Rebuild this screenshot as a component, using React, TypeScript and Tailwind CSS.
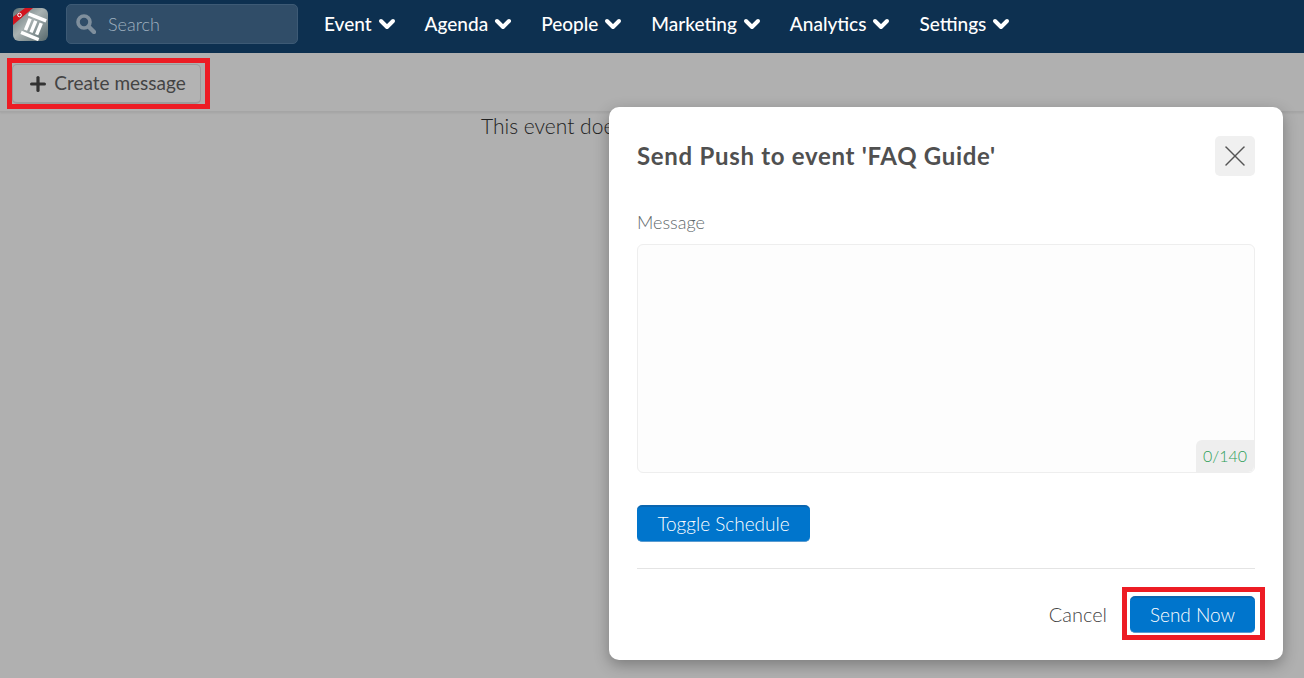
import React from 'react';
import { ChevronDown, Plus, X } from 'lucide-react';

const NAV_ITEMS = ['Event', 'Agenda', 'People', 'Marketing', 'Analytics', 'Settings'];

const Logo = () => (
  <svg width="35" height="33" viewBox="0 0 35 33" className="shrink-0">
    <defs>
      <linearGradient id="logo-bg" x1="0" y1="0" x2="1" y2="1">
        <stop offset="0" stopColor="#5f6f72" />
        <stop offset="0.45" stopColor="#a9b2b2" />
        <stop offset="1" stopColor="#56686c" />
      </linearGradient>
      <clipPath id="logo-clip">
        <rect x="0" y="0" width="35" height="33" rx="6" />
      </clipPath>
    </defs>
    <g clipPath="url(#logo-clip)">
      <rect width="35" height="33" fill="url(#logo-bg)" />
      <polygon points="0,17 0,9 12,0 20,0" fill="#d2141e" />
      <circle cx="6.5" cy="7" r="1.8" fill="none" stroke="#fff" strokeWidth="1" />
      <g transform="rotate(22 20.7 19)" fill="#fff">
        <rect x="11" y="7" width="19" height="3.5" />
        <rect x="11" y="27" width="19" height="3.5" />
        <rect x="12.5" y="12.5" width="3.5" height="12.5" />
        <rect x="18.5" y="12.5" width="3.5" height="12.5" />
        <rect x="24.5" y="12.5" width="3.5" height="12.5" />
      </g>
    </g>
  </svg>
);

const SearchIcon = () => (
  <svg width="20" height="20" viewBox="0 0 20 20" fill="none" stroke="#7f8f9d" className="shrink-0">
    <circle cx="8" cy="8" r="6" strokeWidth="3.6" />
    <line x1="13" y1="13" x2="18" y2="18" strokeWidth="4.4" strokeLinecap="round" />
  </svg>
);

export default function App() {
  return (
    <div className="relative h-[678px] overflow-hidden bg-[#b0b0b0] font-['Lato','Open_Sans',sans-serif]">
      {/* top nav */}
      <nav className="flex h-[53px] items-center bg-[#0d3050] pb-[5px] pl-[13px]">
        <Logo />
        <div className="ml-[18px] flex h-10 w-[232px] items-center rounded-[5px] border border-[#3d5a75] bg-[#304d68] pl-[9px]">
          <SearchIcon />
          <span className="ml-[12px] text-[18px] font-light text-[#9fb0bf]">Search</span>
        </div>
        <div className="ml-[26px] flex gap-[26px]">
          {NAV_ITEMS.map((item) => (
            <div key={item} className="flex items-center gap-[3px] text-[19px] font-medium text-white">
              {item}
              <ChevronDown size={24} strokeWidth={4} />
            </div>
          ))}
        </div>
      </nav>

      {/* toolbar */}
      <div className="h-[59px] border-b border-[#a5a5a5] pl-[7px] pt-[5px] shadow-[0_1px_2px_rgba(0,0,0,0.08)]">
        <div className="h-[51px] w-[203px] border-[5px] border-[#ed1c24] pt-[1px]">
          <button className="flex h-[40px] w-[189px] items-center justify-center gap-[5px] rounded-[5px] border border-b-2 border-[#9c9c9c] bg-[#b3b3b3] text-[19px] text-[#444444]">
            <Plus size={22} strokeWidth={3.5} className="text-[#333333]" />
            Create message
          </button>
        </div>
      </div>

      <p className="pl-[14px] text-center text-[21px] font-light leading-[28px] text-[#222222]">
        This event does not have any messages
      </p>

      {/* modal */}
      <div className="absolute left-[609px] top-[107px] flex h-[553px] w-[674px] flex-col rounded-[10px] bg-white px-[28px] shadow-[0_5px_15px_rgba(0,0,0,0.3)]">
        <div className="flex items-center justify-between pt-[29px]">
          <h2 className="text-[24px] font-bold tracking-[0.7px] text-[#505050]">Send Push to event 'FAQ Guide'</h2>
          <button className="flex h-10 w-10 items-center justify-center rounded-[5px] bg-[#f0f0f0] text-[#555555]">
            <X size={36} strokeWidth={1} />
          </button>
        </div>

        <label className="mt-[35px] text-[18px] leading-[22px] font-light text-[#5f696c]">Message</label>
        <div className="relative mt-[11px] h-[229px] rounded-[6px] border border-[#eeeeee] bg-[#fdfdfd]">
          <span className="absolute bottom-0 right-0 flex h-[32px] w-[58px] items-center justify-center rounded-br-[6px] rounded-tl-[6px] bg-[#eeeeee] text-[16px] font-light text-[#2f9e5a]">
            0/140
          </span>
        </div>

        <button className="mt-[32px] h-[37px] w-[173px] rounded-[5px] border-t-2 border-b border-t-[#0a66b0] border-b-[#5a9bd0] bg-[#0075cc] text-[19px] font-light text-white">
          Toggle Schedule
        </button>

        <div className="mt-[26px] border-t border-[#e4e4e4]" />

        <div className="mt-[18px] flex items-center justify-end">
          <span className="text-[20px] font-light text-[#444444]">Cancel</span>
          <div className="-mr-[10px] ml-[15px] h-[53px] w-[143px] border-[5px] border-[#ed1c24] px-[3px] pt-[4px]">
            <button className="h-[37px] w-[125px] rounded-[5px] border-t-2 border-b border-t-[#0a66b0] border-b-[#5a9bd0] bg-[#0075cc] text-[19px] font-light text-white">
              Send Now
            </button>
          </div>
        </div>
      </div>
    </div>
  );
}
